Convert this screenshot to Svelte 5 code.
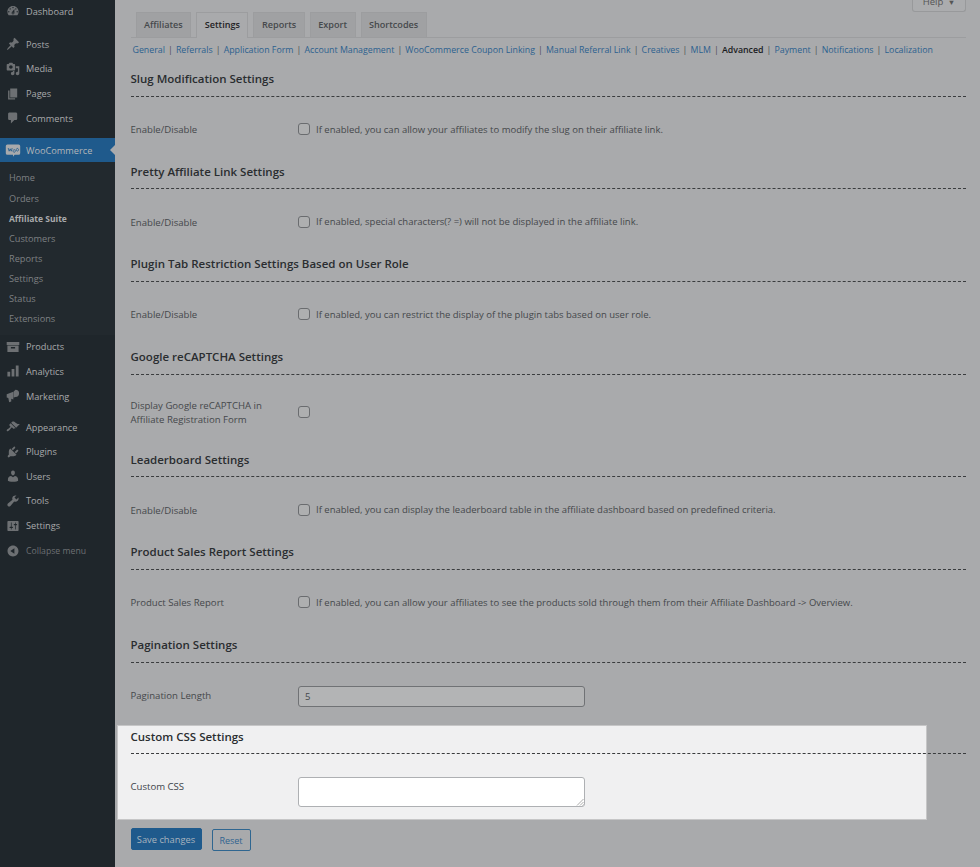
<script>
  const icons = {
    dashboard: "M3.76 16h12.48c1.1-1.37 1.76-3.11 1.76-5 0-4.42-3.58-8-8-8s-8 3.58-8 8c0 1.89.66 3.63 1.76 5zM10 4c.55 0 1 .45 1 1s-.45 1-1 1-1-.45-1-1 .45-1 1-1zM6 6c.55 0 1 .45 1 1s-.45 1-1 1-1-.45-1-1 .45-1 1-1zm8 0c.55 0 1 .45 1 1s-.45 1-1 1-1-.45-1-1 .45-1 1-1zm-5.37 5.55L12 7v6c0 1.1-.9 2-2 2s-2-.9-2-2c0-.57.24-1.08.63-1.45zM4 10c.55 0 1 .45 1 1s-.45 1-1 1-1-.45-1-1 .45-1 1-1zm12 0c.55 0 1 .45 1 1s-.45 1-1 1-1-.45-1-1 .45-1 1-1zm-5 3c0-.55-.45-1-1-1s-1 .45-1 1 .45 1 1 1 1-.45 1-1z",
    posts: "M10.44 3.02l1.82-1.82 6.36 6.35-1.83 1.82c-1.05-.68-2.48-.57-3.41.36l-.75.75c-.92.93-1.04 2.35-.35 3.41l-1.83 1.82-2.41-2.41-2.8 2.79c-.42.42-3.38 2.71-3.8 2.29s1.86-3.39 2.28-3.81l2.79-2.79L4.1 9.36l1.83-1.82c1.05.69 2.48.57 3.4-.36l.75-.75c.93-.92 1.05-2.35.36-3.41z",
    media: "M13 11V4c0-.55-.45-1-1-1h-1.67L9 1H5L3.67 3H2c-.55 0-1 .45-1 1v7c0 .55.45 1 1 1h10c.55 0 1-.45 1-1zM7 4.5c1.38 0 2.5 1.12 2.5 2.5S8.38 9.5 7 9.5 4.5 8.38 4.5 7 5.62 4.5 7 4.5zM14 6h5v10.5c0 1.38-1.12 2.5-2.5 2.5S14 17.88 14 16.5s1.12-2.5 2.5-2.5c.17 0 .34.02.5.05V9h-3V6zm-4 8.05V13h2v3.5c0 1.38-1.12 2.5-2.5 2.5S7 17.88 7 16.5 8.12 14 9.5 14c.17 0 .34.02.5.05z",
    pages: "M6 15V2h10v13H6zm-1 1h8v2H3V5h2v11z",
    comments: "M5 2h9c1.1 0 2 .9 2 2v7c0 1.1-.9 2-2 2h-2l-5 5v-5H5c-1.1 0-2-.9-2-2V4c0-1.1.9-2 2-2z",
    products: "M1 3h18v4H1zM2 8h16v9H2zM7 10v2h6v-2z",
    analytics: "M2 11h4v7H2zM8 7h4v11H8zM14 2h4v16h-4z",
    marketing: "M1 7.5l9.500-3.500v11l-3-1v4l-3 1-1.200-6L1 12zM13.500 1a5.200 5.200 0 0 1 5.200 5.200 5.200 5.200 0 0 1-5.200 5.200L11 12V3.500z",
    appearance: "M14.48 11.06L7.41 3.99l1.5-1.5c.5-.56 2.3-.47 3.51.32 1.21.8 1.43 1.28 2.91 2.1 1.18.64 2.45 1.26 4.45.85zm-.71.71L6.7 4.7 4.93 6.47c-.39.39-.39 1.02 0 1.41l1.06 1.06c.39.39.39 1.03 0 1.42-.6.6-1.43 1.11-2.21 1.69-.35.26-.7.53-1.01.84C1.43 13.23 1 14.4 1 15c0 .5.5 1 1 1 .6 0 1.77-.43 3.11-1.77.31-.31.58-.66.84-1.01.58-.78 1.09-1.61 1.69-2.21.39-.39 1.03-.39 1.42 0l1.06 1.06c.39.39 1.02.39 1.41 0z",
    plugins: "M13.11 4.36L9.87 7.6 8 5.73l3.24-3.24c.35-.34 1.05-.2 1.56.32.52.51.66 1.21.31 1.55zm-8 1.77l.91-1.12 9.01 9.01-1.19.84c-.71.71-2.63 1.16-3.82 1.16H6.14L4.9 17.26c-.59.59-1.54.59-2.12 0-.59-.58-.59-1.53 0-2.12l1.24-1.24v-3.88c0-1.13.4-3.19 1.09-3.89zm7.26 3.97l3.24-3.24c.34-.35 1.04-.21 1.55.31.52.51.66 1.21.31 1.55l-3.24 3.25z",
    users: "M10 9.25c-2.27 0-2.73-3.44-2.73-3.44C7 4.02 7.82 2 9.97 2c2.16 0 2.98 2.02 2.71 3.81 0 0-.41 3.44-2.68 3.44zm0 2.57L12.72 10c2.39 0 4.52 2.33 4.52 4.53v2.49s-3.65 1.13-7.24 1.13c-3.65 0-7.24-1.13-7.24-1.13v-2.49c0-2.25 1.94-4.48 4.47-4.48z",
    tools: "M16.68 9.77c-1.34 1.34-3.3 1.67-4.95.99l-5.41 6.52c-.99.99-2.59.99-3.58 0s-.99-2.59 0-3.57l6.52-5.42c-.68-1.65-.35-3.61.99-4.95 1.28-1.28 3.12-1.62 4.72-1.06l-2.89 2.89 2.82 2.82 2.86-2.87c.53 1.58.18 3.39-1.08 4.65z",
    settings: "M18 16V4c0-.55-.45-1-1-1H3c-.55 0-1 .45-1 1v12c0 .55.45 1 1 1h14c.55 0 1-.45 1-1zM8 11h1c.55 0 1 .45 1 1s-.45 1-1 1H8v1.5c0 .28-.22.5-.5.5s-.5-.22-.5-.5V13H6c-.55 0-1-.45-1-1s.45-1 1-1h1V5.5c0-.28.22-.5.5-.5s.5.22.5.5V11zm5-2h-1c-.55 0-1-.45-1-1s.45-1 1-1h1V5.5c0-.28.22-.5.5-.5s.5.22.5.5V7h1c.55 0 1 .45 1 1s-.45 1-1 1h-1v5.5c0 .28-.22.5-.5.5s-.5-.22-.5-.5V9z",
    collapse: "M10 2.16c4.33 0 7.84 3.51 7.84 7.84s-3.51 7.84-7.84 7.84S2.16 14.33 2.16 10 5.71 2.16 10 2.16zm2 11.72V6.12L6.18 9.97z"
  };
  const groupsA = [["dashboard","Dashboard"]];
  const groupsB = [["posts","Posts"],["media","Media"],["pages","Pages"],["comments","Comments"]];
  const sub = ["Home","Orders","Affiliate Suite","Customers","Reports","Settings","Status","Extensions"];
  const groupsC = [["products","Products"],["analytics","Analytics"],["marketing","Marketing"]];
  const groupsD = [["appearance","Appearance"],["plugins","Plugins"],["users","Users"],["tools","Tools"],["settings","Settings"]];
  const tabs = ["Affiliates","Settings","Reports","Export","Shortcodes"];
  const links = ["General","Referrals","Application Form","Account Management","WooCommerce Coupon Linking","Manual Referral Link","Creatives","MLM","Advanced","Payment","Notifications","Localization"];
  const sections = [
    { title: "Slug Modification Settings", label: "Enable/Disable", text: "If enabled, you can allow your affiliates to modify the slug on their affiliate link." },
    { title: "Pretty Affiliate Link Settings", label: "Enable/Disable", text: "If enabled, special characters(? =) will not be displayed in the affiliate link." },
    { title: "Plugin Tab Restriction Settings Based on User Role", label: "Enable/Disable", text: "If enabled, you can restrict the display of the plugin tabs based on user role." },
    { title: "Google reCAPTCHA Settings", label: "Display Google reCAPTCHA in Affiliate Registration Form", text: "" },
    { title: "Leaderboard Settings", label: "Enable/Disable", text: "If enabled, you can display the leaderboard table in the affiliate dashboard based on predefined criteria." },
    { title: "Product Sales Report Settings", label: "Product Sales Report", text: "If enabled, you can allow your affiliates to see the products sold through them from their Affiliate Dashboard -> Overview." }
  ];
</script>

{#snippet item(entry)}
  <li class="item">
    <svg class="icon" viewBox="0 0 20 20"><path d={icons[entry[0]]} fill-rule="evenodd" /></svg>
    <span>{entry[1]}</span>
  </li>
{/snippet}

<div class="page">
  <nav class="side">
    <ul class="group first">{#each groupsA as e}{@render item(e)}{/each}</ul>
    <ul class="group">{#each groupsB as e}{@render item(e)}{/each}</ul>
    <div class="woo">
      <svg class="wooicon" viewBox="0 0 20 20"><path d="M3 3h14a2 2 0 0 1 2 2v9a2 2 0 0 1-2 2h-5l-2 2.500V16H3a2 2 0 0 1-2-2V5a2 2 0 0 1 2-2z" fill="#a9aaac"/><path d="M4 7.500l1.200 4 1.300-3 1.300 3 1.200-4M11.500 9.500a1.400 1.700 0 1 0 .01 0M15.500 8a1.400 1.700 0 1 0 .01 0" fill="none" stroke="#1f5a8c" stroke-width="1"/></svg>
      <span>WooCommerce</span>
      <i class="notch"></i>
    </div>
    <ul class="sub">
      {#each sub as s}<li class:on={s === "Affiliate Suite"}>{s}</li>{/each}
    </ul>
    <ul class="group mid">{#each groupsC as e}{@render item(e)}{/each}</ul>
    <ul class="group">{#each groupsD as e}{@render item(e)}{/each}</ul>
    <div class="item collapse">
      <svg class="icon" viewBox="0 0 20 20"><path d={icons.collapse} fill-rule="evenodd"/></svg>
      <span>Collapse menu</span>
    </div>
  </nav>

  <main class="main">
    <div class="meta"><button class="help">Help <b>▼</b></button></div>
    <div class="tabs">
      {#each tabs as t}<span class="tab" class:active={t === "Settings"}>{t}</span>{/each}
    </div>
    <div class="links">
      {#each links as l, i}
        {#if i > 0}<span class="sep">|</span>{/if}
        <span class="link" class:cur={l === "Advanced"}>{l}</span>
      {/each}
    </div>

    {#each sections as s}
      <section class="sec">
        <h3>{s.title}</h3>
        <div class="dash"></div>
        <div class="row">
          <div class="lab">{s.label}</div>
          <div class="field"><i class="check"></i>{#if s.text}<span>{s.text}</span>{/if}</div>
        </div>
      </section>
    {/each}

    <section class="sec">
      <h3>Pagination Settings</h3>
      <div class="dash"></div>
      <div class="row">
        <div class="lab">Pagination Length</div>
        <div class="field"><div class="input">5</div></div>
      </div>
    </section>

    <section class="sec spot">
      <h3>Custom CSS Settings</h3>
      <div class="dash"></div>
      <div class="row top">
        <div class="lab">Custom CSS</div>
        <div class="field">
          <div class="area">
            <svg viewBox="0 0 8 8" class="grip"><path d="M7.500 1L1 7.500M7.500 4L4 7.500M7.500 6.500l-1 1" stroke="#888" stroke-width=".7" fill="none"/></svg>
          </div>
        </div>
      </div>
    </section>

    <div class="actions">
      <button class="save">Save changes</button>
      <button class="reset">Reset</button>
    </div>
  </main>
</div>

<style>
  :global(body) { margin: 0; background: #a9aaac; }
  ul { list-style: none; margin: 0; padding: 0; }
  .page {
    display: flex; width: 980px; height: 867px; overflow: hidden;
    font-family: "Open Sans", "Liberation Sans", sans-serif;
    font-size: 9.5px; color: #45484b; background: #a9aaac;
  }
  .side { width: 115px; flex: none; background: #1f262b; color: #a9aaac; font-size: 9.2px; }
  .group { padding-bottom: 7.5px; }
  .group.first { padding-bottom: 8.5px; margin-top: -1px; }
  .group.mid { padding-bottom: 6.5px; }
  .item { display: flex; align-items: center; height: 24.6px; }
  .icon { width: 14px; height: 14px; margin-left: 6px; margin-right: 6px; fill: #6d7073; flex: none; }
  .woo { display: flex; align-items: center; height: 24.5px; background: #1f5a8c; color: #b4b6b8; position: relative; }
  .wooicon { width: 16px; height: 16px; margin-left: 5px; margin-right: 5px; flex: none; }
  .notch { position: absolute; right: 0; top: 7px; border: 5.5px solid transparent; border-right-color: #a9aaac; border-left-width: 0; }
  .sub { padding: 6px 0 5px; background: #22292e; color: #7e8083; font-size: 9.2px; }
  .sub li { height: 20.15px; line-height: 20.15px; padding-left: 9px; }
  .sub li.on { color: #a9aaac; font-weight: 700; font-size: 8.5px; }
  .collapse { color: #6d7073; font-size: 8.7px; margin-top: -6.5px; }
  .main { flex: 1; min-width: 0; padding: 0 14px 0 15.5px; }
  .meta { height: 12px; display: flex; justify-content: flex-end; align-items: flex-end; overflow: hidden; }
  .help { height: 20px; width: 54px; padding: 0; border: 1px solid #98999b; border-top: 0; border-radius: 0 0 3px 3px; background: #abacae; color: #555; font: inherit; }
  .help b { font-size: 7.5px; font-weight: 400; margin-left: 2px; }
  .tabs { display: flex; gap: 5px; height: 25px; padding-left: 5px; border-bottom: 1px solid #9c9d9f; font-size: 9.1px; font-weight: 600; }
  .tab { padding: 0 7.5px; line-height: 24px; background: #a0a1a3; border: 1px solid #9c9d9f; border-bottom: 0; color: #46494c; height: 25px; box-sizing: border-box; }
  .tab.active { background: #a9aaac; color: #1f2225; height: 26px; }
  .links { display: flex; padding: 5px 0 0 2px; height: 26.5px; box-sizing: border-box; line-height: 15px; font-size: 8.8px; white-space: nowrap; }
  .sep { width: 5px; text-align: center; margin: 0 3px; color: #4a4d50; }
  .link { color: #2c618f; }
  .link.cur { color: #1a1c1e; font-weight: 600; }
  h3 { margin: 0; height: 17px; line-height: 17px; font-size: 11.5px; font-weight: 600; color: #2a2d30; }
  .sec { padding-top: 5.5px; }
  .dash { border-top: 1px dashed #3a3c3e; width: 100%; margin-top: 8.5px; }
  .row { display: flex; align-items: center; min-height: 34px; padding: 15.5px 0 11.2px; }
  .row.top { align-items: flex-start; min-height: 0; padding: 23px 0 12px; }
  .lab { width: 167.5px; flex: none; padding: 9px 20px 7px 0; box-sizing: border-box; line-height: 14px; font-size: 9.6px; }
  .row.top .lab { padding: 3px 20px 0 0; }
  .field { display: flex; align-items: center; flex: 1; }
  .check { width: 12px; height: 12px; box-sizing: border-box; border: 1px solid #6a6c6f; border-radius: 3px; background: #aeafb0; margin-right: 6px; flex: none; }
  .input { width: 287px; height: 21px; margin-top: 2px; box-sizing: border-box; border: 1px solid #707275; border-radius: 3px; background: #b3b4b5; padding-left: 6px; line-height: 19px; }
  .spot { width: 807.5px; margin: 2.6px 0 0 -12.5px; padding: 2.5px 0 0 12.5px; box-sizing: border-box; background: #f0f0f1; box-shadow: 0 0 0 1px #c6c6c7; color: #3c434a; }
  .spot .dash { width: 835.5px; margin-top: 7.5px; }
  .area { width: 287px; height: 30px; box-sizing: border-box; border: 1px solid #aeb0b3; border-radius: 3px; background: #fff; position: relative; }
  .grip { position: absolute; right: 0; bottom: 0; width: 8px; height: 8px; }
  .actions { display: flex; gap: 10px; align-items: flex-start; padding-top: 9.5px; }
  .actions button { font: inherit; border-radius: 2px; box-sizing: border-box; padding: 0; }
  .actions .save { width: 71px; height: 22px; background: #1f5a8c; border: 1px solid #1f5a8c; color: #a9b4be; font-size: 9.3px; }
  .actions .reset { width: 39px; height: 22px; margin-top: 1px; background: #a9aaac; border: 1px solid #2f6690; color: #2f6390; font-size: 9px; }
</style>
